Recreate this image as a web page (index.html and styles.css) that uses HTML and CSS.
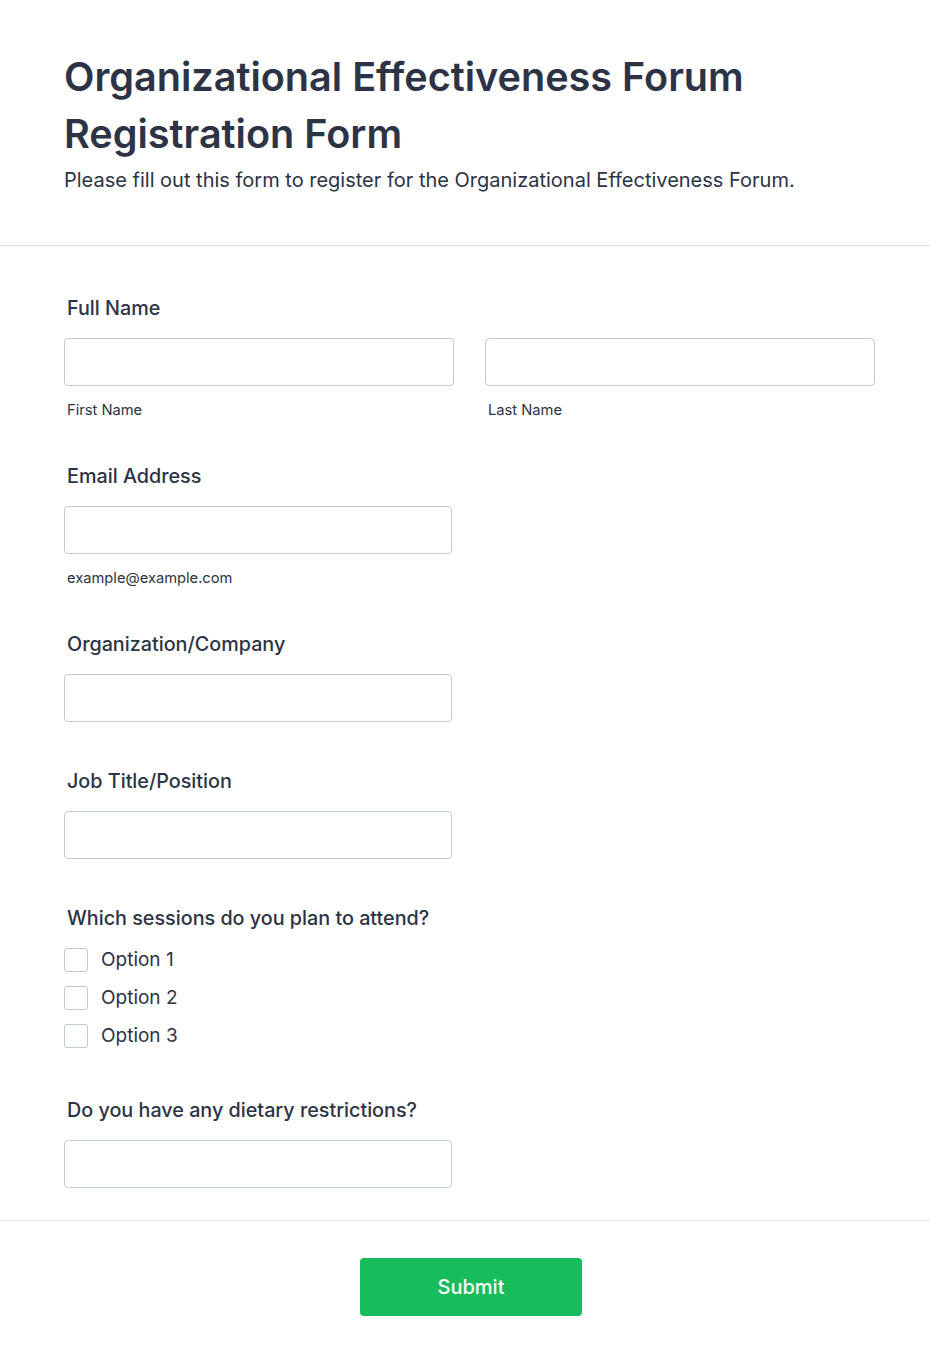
FILE: index.html
```html
<!DOCTYPE html>
<html lang="en">
<head>
<meta charset="utf-8">
<title>Organizational Effectiveness Forum Registration Form</title>
<link rel="stylesheet" href="styles.css">
</head>
<body>
<div class="page">
  <header class="form-header">
    <h1 class="form-title">Organizational Effectiveness Forum Registration Form</h1>
    <p class="form-subtitle">Please fill out this form to register for the Organizational Effectiveness Forum.</p>
  </header>

  <form class="form-body">
    <div class="field field-sub">
      <label class="field-label">Full Name</label>
      <div class="name-row">
        <div class="name-col">
          <input class="text-input" type="text">
          <div class="sublabel">First Name</div>
        </div>
        <div class="name-col">
          <input class="text-input" type="text">
          <div class="sublabel">Last Name</div>
        </div>
      </div>
    </div>

    <div class="field field-sub">
      <label class="field-label">Email Address</label>
      <input class="text-input single" type="email">
      <div class="sublabel">example@example.com</div>
    </div>

    <div class="field">
      <label class="field-label">Organization/Company</label>
      <input class="text-input single" type="text">
    </div>

    <div class="field">
      <label class="field-label">Job Title/Position</label>
      <input class="text-input single" type="text">
    </div>

    <div class="field field-checks">
      <label class="field-label">Which sessions do you plan to attend?</label>
      <div class="options">
        <label class="option"><span class="checkbox"></span><span class="option-text">Option 1</span></label>
        <label class="option"><span class="checkbox"></span><span class="option-text">Option 2</span></label>
        <label class="option"><span class="checkbox"></span><span class="option-text">Option 3</span></label>
      </div>
    </div>

    <div class="field">
      <label class="field-label">Do you have any dietary restrictions?</label>
      <input class="text-input single" type="text">
    </div>
  </form>

  <footer class="form-footer">
    <button class="submit-btn" type="button">Submit</button>
  </footer>
</div>
</body>
</html>
```

FILE: styles.css
```css
* {
  box-sizing: border-box;
}

html, body {
  margin: 0;
  padding: 0;
  background: #ffffff;
}

body {
  font-family: Inter, "Noto Sans", "Liberation Sans", sans-serif;
  color: #2c3345;
}

.page {
  width: 930px;
  min-height: 1367px;
  background: #ffffff;
}

.form-header {
  padding: 49px 64px 0;
  height: 246px;
  border-bottom: 1px solid #dcdce6;
}

.form-title {
  margin: 0;
  font-size: 39.6px;
  line-height: 57px;
  font-weight: 600;
  color: #2c3345;
}

.form-subtitle {
  margin: 5px 0 0;
  font-size: 20px;
  line-height: 24px;
  font-weight: 400;
  color: #2c3345;
}

.form-body {
  padding: 50px 52px 0 64px;
}

.field {
  margin-bottom: 47px;
}

.field.field-sub {
  margin-bottom: 44px;
}

.field:last-child {
  margin-bottom: 0;
}

.field-label {
  display: block;
  padding-left: 3px;
  font-size: 19.75px;
  line-height: 24px;
  font-weight: 500;
  color: #2c3345;
  margin-bottom: 18px;
}

.name-row {
  display: flex;
  gap: 31px;
}

.name-col {
  width: 390px;
}

.text-input {
  display: block;
  width: 100%;
  height: 48px;
  border: 1px solid #c3cad8;
  border-radius: 4px;
  background: #ffffff;
  margin: 0;
  padding: 0 12px;
  font: inherit;
}

.text-input.single {
  width: 388px;
}

.sublabel {
  margin-top: 14px;
  padding-left: 3px;
  font-size: 14.7px;
  line-height: 20px;
  color: #2c3345;
}

.field.field-checks {
  margin-bottom: 50px;
}

.field-checks .field-label {
  margin-bottom: 18px;
}

.options {
  display: flex;
  flex-direction: column;
  gap: 14px;
}

.option {
  display: flex;
  align-items: center;
  gap: 13px;
  height: 24px;
}

.checkbox {
  width: 24px;
  height: 24px;
  border: 1px solid #c3cad8;
  border-radius: 3px;
  background: #ffffff;
  flex: none;
}

.option-text {
  font-size: 19px;
  line-height: 24px;
  color: #2c3345;
}

.form-footer {
  margin-top: 32px;
  border-top: 1px solid #e6e6ee;
  padding: 37px 52px 51px 64px;
  display: flex;
  justify-content: center;
}

.submit-btn {
  width: 222px;
  height: 58px;
  border: none;
  border-radius: 4px;
  background: #18bd5b;
  color: #ffffff;
  font-family: Inter, "Noto Sans", "Liberation Sans", sans-serif;
  font-size: 20px;
  font-weight: 500;
  cursor: pointer;
}
```
